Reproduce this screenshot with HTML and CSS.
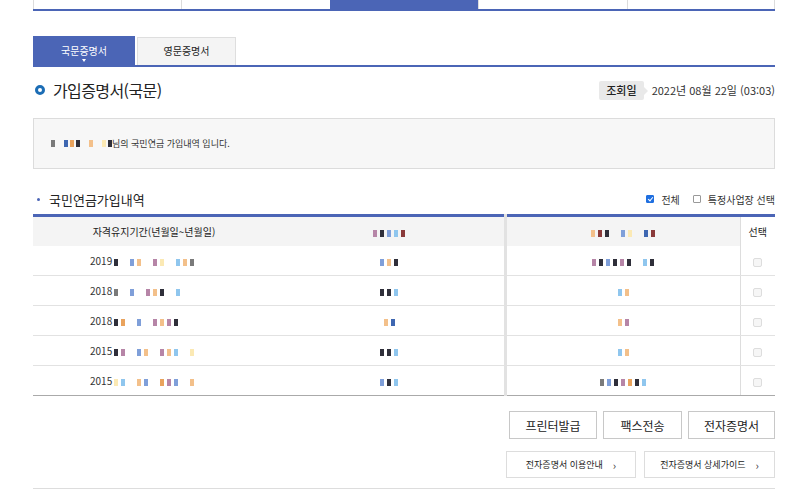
FILE: index.html
```html
<!DOCTYPE html>
<html lang="ko">
<head>
<meta charset="utf-8">
<link rel="stylesheet" href="styles.css">
</head>
<body>
<div class="wrap">
  <div class="topnav">
    <div class="tn"></div><div class="tn"></div><div class="tn active"></div><div class="tn"></div><div class="tn"></div>
  </div>

  <div class="tabs">
    <div class="tab on">국문증명서<span class="caret"></span></div>
    <div class="tab">영문증명서</div>
  </div>

  <div class="titlerow">
    <h1 class="title"><span class="ring"></span>가입증명서(국문)</h1>
    <div class="date"><span class="badge">조회일</span><span class="dtext">2022년 08월 22일 (03:03)</span></div>
  </div>

  <div class="info">
    <span class="mosaic m-name"><i class="c6"></i><i class="g"></i><i class="c5"></i><i class="c3"></i><i class="c1"></i><i class="g"></i><i class="c4"></i><i class="g"></i><i class="c7"></i><i class="c1"></i></span>님의 국민연금 가입내역 입니다.
  </div>

  <div class="sechead">
    <h2 class="subtitle"><span class="dot"></span>국민연금가입내역</h2>
    <div class="opts">
      <label class="opt"><span class="cb checked"></span>전체</label>
      <label class="opt"><span class="cb"></span>특정사업장 선택</label>
    </div>
  </div>

  <table class="tbl">
    <colgroup><col class="w1"><col class="w2"><col class="w3"><col class="w4"></colgroup>
    <thead>
      <tr><th>자격유지기간(년월일~년월일)</th><th><span class="mosaic"><i class="c8"></i><i class="c1"></i><i class="c9"></i><i class="c2"></i><i class="c10"></i></span></th><th class="sep"><span class="mosaic"><i class="c4"></i><i class="c10"></i><i class="c1"></i><i class="g"></i><i class="c9"></i><i class="c7"></i><i class="g"></i><i class="c5"></i><i class="c10"></i></span></th><th class="sel">선택</th></tr>
    </thead>
    <tbody>
      <tr><td class="yr">2019<span class="mosaic"><i class="c1"></i><i class="g"></i><i class="c9"></i><i class="c4"></i><i class="g"></i><i class="c8"></i><i class="c7"></i><i class="g"></i><i class="c2"></i><i class="c4"></i><i class="c6"></i></span></td><td><span class="mosaic"><i class="c9"></i><i class="c4"></i><i class="c1"></i></span></td><td class="sep"><span class="mosaic"><i class="c8"></i><i class="c1"></i><i class="c9"></i><i class="c1"></i><i class="c8"></i><i class="c1"></i><i class="g"></i><i class="c2"></i><i class="c1"></i></span></td><td class="sel"><span class="box"></span></td></tr>
      <tr><td class="yr">2018<span class="mosaic"><i class="c6"></i><i class="g"></i><i class="c9"></i><i class="g"></i><i class="c8"></i><i class="c4"></i><i class="c1"></i><i class="g"></i><i class="c2"></i></span></td><td><span class="mosaic"><i class="c1"></i><i class="c1"></i><i class="c2"></i></span></td><td class="sep"><span class="mosaic"><i class="c2"></i><i class="c4"></i></span></td><td class="sel"><span class="box"></span></td></tr>
      <tr><td class="yr">2018<span class="mosaic"><i class="c1"></i><i class="c3"></i><i class="g"></i><i class="c9"></i><i class="g"></i><i class="c8"></i><i class="c4"></i><i class="c8"></i><i class="c1"></i></span></td><td><span class="mosaic"><i class="c4"></i><i class="c5"></i></span></td><td class="sep"><span class="mosaic"><i class="c4"></i><i class="c8"></i></span></td><td class="sel"><span class="box"></span></td></tr>
      <tr><td class="yr">2015<span class="mosaic"><i class="c1"></i><i class="c8"></i><i class="g"></i><i class="c9"></i><i class="c4"></i><i class="g"></i><i class="c8"></i><i class="c4"></i><i class="c2"></i><i class="g"></i><i class="c7"></i></span></td><td><span class="mosaic"><i class="c1"></i><i class="c1"></i><i class="c2"></i></span></td><td class="sep"><span class="mosaic"><i class="c2"></i><i class="c4"></i></span></td><td class="sel"><span class="box"></span></td></tr>
      <tr><td class="yr">2015<span class="mosaic"><i class="c7"></i><i class="c2"></i><i class="g"></i><i class="c4"></i><i class="c9"></i><i class="g"></i><i class="c3"></i><i class="c8"></i><i class="c9"></i><i class="g"></i><i class="c4"></i></span></td><td><span class="mosaic"><i class="c9"></i><i class="c1"></i><i class="c2"></i></span></td><td class="sep"><span class="mosaic"><i class="c6"></i><i class="c9"></i><i class="c1"></i><i class="c8"></i><i class="c3"></i><i class="c1"></i><i class="c2"></i></span></td><td class="sel"><span class="box"></span></td></tr>
    </tbody>
  </table>

  <div class="btnrow">
    <button class="btn">프린터발급</button>
    <button class="btn">팩스전송</button>
    <button class="btn">전자증명서</button>
  </div>

  <div class="linkrow">
    <a class="lnk">전자증명서 이용안내<span class="chev">›</span></a>
    <a class="lnk">전자증명서 상세가이드<span class="chev">›</span></a>
  </div>

  <div class="bottomline"></div>
</div>
</body>
</html>
```

FILE: styles.css
```css
* { box-sizing: border-box; }
html, body { margin: 0; padding: 0; background: #fff; }
body {
  font-family: "Noto Sans CJK KR", "Noto Sans", sans-serif;
  color: #333;
  width: 785px;
  height: 489px;
  overflow: hidden;
}
.wrap { margin-left: 33px; width: 742px; }

.topnav {
  display: grid;
  grid-template-columns: repeat(5, 1fr);
  height: 11px;
  border-bottom: 2px solid #4b65b6;
}
.tn { border-left: 1px solid #dcdcdc; }
.tn:last-child { border-right: 1px solid #dcdcdc; }
.tn.active { background: #4b65b6; border-left-color: #4b65b6; }

.tabs {
  margin-top: 25px;
  display: flex;
  align-items: flex-end;
  gap: 2px;
  height: 31px;
  border-bottom: 2px solid #4b65b6;
}
.tab {
  position: relative;
  width: 99px;
  height: 28px;
  display: flex;
  align-items: center;
  justify-content: center;
  font-size: 10px;
  color: #222;
  background: #f4f4f4;
  border: 1px solid #dedede;
  border-bottom: none;
  padding-bottom: 2px;
}
.tab.on {
  width: 102px;
  height: 29px;
  background: #4b65b6;
  border-color: #4b65b6;
  color: #fff;
}
.caret {
  position: absolute;
  left: 50%;
  bottom: 3px;
  margin-left: -2px;
  border-left: 2px solid transparent;
  border-right: 2px solid transparent;
  border-top: 3px solid #fff;
}

.titlerow {
  margin-top: 12px;
  height: 22px;
  display: flex;
  align-items: center;
  justify-content: space-between;
}
.title {
  margin: 0;
  font-size: 16px;
  font-weight: 400;
  color: #222;
  display: flex;
  align-items: center;
  letter-spacing: -0.6px;
}
.ring {
  width: 10px;
  height: 10px;
  border: 3px solid #1c6db5;
  border-radius: 50%;
  margin: 0 8px 0 2px;
}
.date { display: flex; align-items: center; font-size: 11px; color: #333; }
.badge {
  position: relative;
  background: #e9e9e9;
  font-weight: 500;
  color: #222;
  padding: 2px 7px;
  line-height: 15px;
  border-radius: 2px;
  margin-right: 8px;
  font-size: 11px;
}
.badge::after {
  content: "";
  position: absolute;
  right: -4px;
  top: 6px;
  border-top: 4px solid transparent;
  border-bottom: 4px solid transparent;
  border-left: 4px solid #e9e9e9;
}

.info {
  margin-top: 17px;
  height: 51px;
  background: #f7f7f7;
  border: 1px solid #dcdcdc;
  display: flex;
  align-items: center;
  padding-left: 17px;
  font-size: 9px;
  color: #333;
}

.mosaic { display: inline-flex; align-items: center; gap: 3px; vertical-align: middle; }
.mosaic i { display: inline-block; width: 4px; height: 7px; }
.mosaic .g { width: 6px; background: transparent; }
.m-name { margin-right: 0; gap: 2px; }
.m-name .g { width: 5px; }
.c1 { background: #2f2f3a; }
.c2 { background: #8fc6ee; }
.c3 { background: #e9a35d; }
.c4 { background: #f3c08a; }
.c5 { background: #3e67b1; }
.c6 { background: #7a7a7a; }
.c7 { background: #fbe9b4; }
.c8 { background: #b685a7; }
.c9 { background: #7f9fd9; }
.c10 { background: #8a3a3a; }

.sechead {
  margin-top: 20px;
  height: 20px;
  display: flex;
  align-items: center;
  justify-content: space-between;
}
.subtitle {
  margin: 0;
  font-size: 13px;
  font-weight: 400;
  color: #222;
  display: flex;
  align-items: center;
}
.dot {
  width: 3px; height: 3px; border-radius: 50%;
  background: #4b65b6;
  margin: 0 9px 0 4px;
}
.opts { display: flex; gap: 13px; font-size: 10px; color: #333; }
.opt { display: flex; align-items: center; gap: 7px; }
.cb {
  width: 8px; height: 8px;
  border: 1px solid #999;
  border-radius: 1px;
  background: #fff;
}
.cb.checked { background: #1f6fe0; border-color: #1f6fe0; position: relative; }
.cb.checked::after {
  content: "";
  position: absolute;
  left: 2px; top: 0px;
  width: 2px; height: 4px;
  border: solid #fff;
  border-width: 0 1px 1px 0;
  transform: rotate(40deg);
}

.tbl {
  margin-top: 5px;
  width: 742px;
  border-collapse: collapse;
  table-layout: fixed;
  font-size: 10px;
}
.w1 { width: 242px; }
.w2 { width: 230px; }
.w3 { width: 235px; }
.w4 { width: 35px; }
.tbl thead tr { border-top: 3px solid #4b65b6; }
.tbl th {
  height: 30px;
  background: #f4f4f4;
  font-weight: 400;
  color: #222;
  font-size: 10px;
  text-align: center;
  padding: 0;
}
.tbl th.sel { background: #fff; border-left: 1px solid #ddd; }
.tbl td {
  height: 30px;
  padding: 0;
  text-align: center;
  border-bottom: 1px solid #e2e2e2;
  color: #333;
}
.tbl tbody tr:last-child td { border-bottom: 1px solid #aaa; }
.tbl td.yr { text-align: left; padding-left: 57px; }
.tbl td.yr .mosaic { margin-left: 2px; }
.sep { border-left: 3px solid #e2e2e2; }
.tbl td.sel { border-left: 1px solid #ddd; }
.box {
  display: inline-block;
  width: 9px; height: 9px;
  border: 1px solid #ddd;
  background: #f6f6f6;
  border-radius: 2px;
  vertical-align: middle;
}

.btnrow {
  margin-top: 15px;
  display: flex;
  justify-content: flex-end;
  gap: 6px;
}
.btn {
  width: 88px;
  height: 28px;
  background: #fff;
  border: 1px solid #c8c8c8;
  font-family: inherit;
  font-size: 12px;
  color: #222;
  padding: 0;
}
.btn:nth-child(2) { width: 79px; }
.btn:last-child { width: 87px; }

.linkrow {
  margin-top: 12px;
  display: flex;
  justify-content: flex-end;
  gap: 8px;
}
.lnk {
  width: 130px;
  height: 27px;
  border: 1px solid #ddd;
  display: flex;
  align-items: center;
  justify-content: center;
  font-size: 9px;
  color: #222;
  gap: 10px;
}
.lnk:last-child { width: 131px; }
.chev { font-size: 11px; color: #333; }

.bottomline {
  margin-top: 10px;
  border-top: 1px solid #ddd;
}
```
